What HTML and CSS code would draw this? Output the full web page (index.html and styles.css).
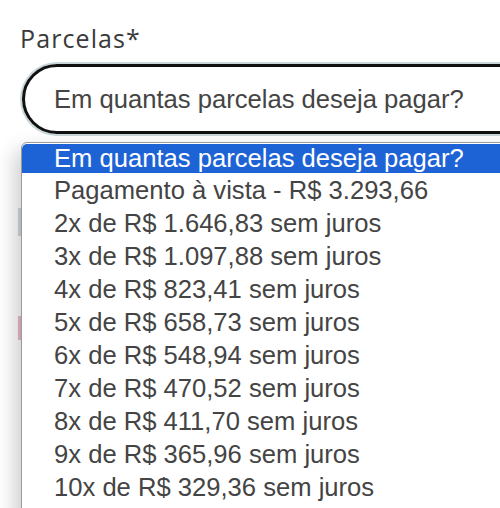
FILE: index.html
```html
<!DOCTYPE html>
<html lang="pt-BR">
<head>
<meta charset="utf-8">
<title>Parcelas</title>
<link rel="stylesheet" href="styles.css">
</head>
<body>
<div class="page">
  <div class="field">
    <div class="label">Parcelas*</div>
    <div class="select">
      <span class="select-text">Em quantas parcelas deseja pagar?</span>
    </div>
  </div>
  <div class="under under-a"></div>
  <div class="under under-b"></div>
  <ul class="dropdown">
    <li class="opt selected">Em quantas parcelas deseja pagar?</li>
    <li class="opt">Pagamento à vista - R$ 3.293,66</li>
    <li class="opt">2x de R$ 1.646,83 sem juros</li>
    <li class="opt">3x de R$ 1.097,88 sem juros</li>
    <li class="opt">4x de R$ 823,41 sem juros</li>
    <li class="opt">5x de R$ 658,73 sem juros</li>
    <li class="opt">6x de R$ 548,94 sem juros</li>
    <li class="opt">7x de R$ 470,52 sem juros</li>
    <li class="opt">8x de R$ 411,70 sem juros</li>
    <li class="opt">9x de R$ 365,96 sem juros</li>
    <li class="opt">10x de R$ 329,36 sem juros</li>
  </ul>
</div>
</body>
</html>
```

FILE: styles.css
```css
html, body {
  margin: 0;
  padding: 0;
  background: #ffffff;
  overflow: hidden;
}

.page {
  position: relative;
  width: 500px;
  height: 508px;
  overflow: hidden;
}

.field {
  padding: 22px 0 0 20px;
}

.label {
  font-family: "Open Sans", "Liberation Sans", sans-serif;
  font-size: 25px;
  line-height: 32px;
  color: #3a3a3a;
  letter-spacing: 1.1px;
}

.select {
  margin-top: 10px;
  margin-left: 2px;
  width: 540px;
  height: 70px;
  box-sizing: border-box;
  border: 3px solid #111111;
  border-radius: 35px;
  box-shadow: 0 0 0 2px #c9d6da;
  display: flex;
  align-items: center;
  padding-left: 29px;
}

.select-text {
  font-family: "Liberation Sans", Arial, sans-serif;
  font-size: 25.6px;
  color: #444444;
}

.under {
  position: absolute;
  left: 18px;
  width: 3px;
}

.under-a {
  top: 208px;
  height: 28px;
  background: #d3d9de;
}

.under-b {
  top: 316px;
  height: 24px;
  background: #e9bcc8;
}

.dropdown {
  position: absolute;
  left: 21px;
  top: 142px;
  width: 540px;
  height: 420px;
  margin: 0;
  padding: 1px 0 0 0;
  list-style: none;
  background: #ffffff;
  border: 1px solid #9a9a9a;
  border-top-left-radius: 6px;
  box-shadow: -6px 8px 20px rgba(0, 0, 0, 0.2);
  overflow: hidden;
}

.opt {
  font-family: "Liberation Sans", Arial, sans-serif;
  font-size: 25.6px;
  line-height: 33px;
  height: 33px;
  color: #444444;
  padding-left: 32px;
  white-space: nowrap;
}

.opt.selected {
  background: #1e63d6;
  color: #ffffff;
  height: 29px;
  line-height: 29px;
  margin-bottom: 1px;
  border-top-left-radius: 5px;
}
```
